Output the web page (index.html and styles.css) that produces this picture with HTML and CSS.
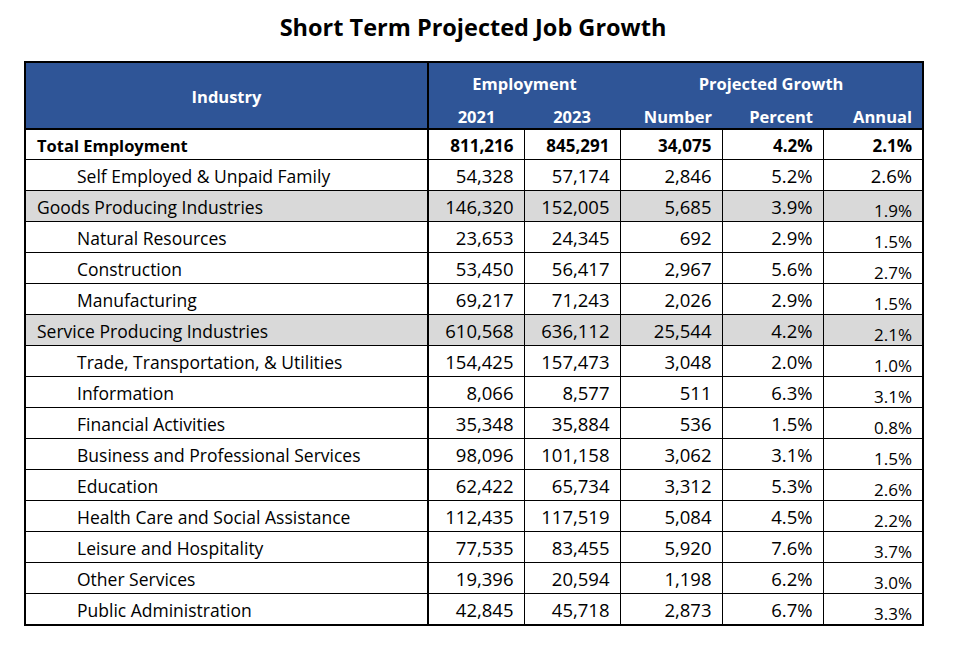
FILE: index.html
```html
<!DOCTYPE html>
<html>
<head>
<meta charset="utf-8">
<link rel="stylesheet" href="styles.css">
</head>
<body>
<div class="page">
  <h1 class="title">Short Term Projected Job Growth</h1>
  <table class="jobs">
    <colgroup>
      <col class="c-ind"><col class="c-y1"><col class="c-y2"><col class="c-num"><col class="c-pct"><col class="c-ann">
    </colgroup>
    <thead>
      <tr class="h1">
        <th rowspan="2" class="h-ind">Industry</th>
        <th colspan="2" class="h-grp">Employment</th>
        <th colspan="3" class="h-grp">Projected Growth</th>
      </tr>
      <tr class="h2">
        <th class="h-c">2021</th>
        <th class="h-c">2023</th>
        <th class="h-r">Number</th>
        <th class="h-r">Percent</th>
        <th class="h-r">Annual</th>
      </tr>
    </thead>
    <tbody>
      <tr class="total"><td class="name">Total Employment</td><td>811,216</td><td>845,291</td><td>34,075</td><td>4.2%</td><td>2.1%</td></tr>
      <tr><td class="name sub">Self Employed &amp; Unpaid Family</td><td>54,328</td><td>57,174</td><td>2,846</td><td>5.2%</td><td>2.6%</td></tr>
      <tr class="group"><td class="name">Goods Producing Industries</td><td>146,320</td><td>152,005</td><td>5,685</td><td>3.9%</td><td class="ann">1.9%</td></tr>
      <tr><td class="name sub">Natural Resources</td><td>23,653</td><td>24,345</td><td>692</td><td>2.9%</td><td class="ann">1.5%</td></tr>
      <tr><td class="name sub">Construction</td><td>53,450</td><td>56,417</td><td>2,967</td><td>5.6%</td><td class="ann">2.7%</td></tr>
      <tr><td class="name sub">Manufacturing</td><td>69,217</td><td>71,243</td><td>2,026</td><td>2.9%</td><td class="ann">1.5%</td></tr>
      <tr class="group"><td class="name">Service Producing Industries</td><td>610,568</td><td>636,112</td><td>25,544</td><td>4.2%</td><td class="ann">2.1%</td></tr>
      <tr><td class="name sub">Trade, Transportation, &amp; Utilities</td><td>154,425</td><td>157,473</td><td>3,048</td><td>2.0%</td><td class="ann">1.0%</td></tr>
      <tr><td class="name sub">Information</td><td>8,066</td><td>8,577</td><td>511</td><td>6.3%</td><td class="ann">3.1%</td></tr>
      <tr><td class="name sub">Financial Activities</td><td>35,348</td><td>35,884</td><td>536</td><td>1.5%</td><td class="ann">0.8%</td></tr>
      <tr><td class="name sub">Business and Professional Services</td><td>98,096</td><td>101,158</td><td>3,062</td><td>3.1%</td><td class="ann">1.5%</td></tr>
      <tr><td class="name sub">Education</td><td>62,422</td><td>65,734</td><td>3,312</td><td>5.3%</td><td class="ann">2.6%</td></tr>
      <tr><td class="name sub">Health Care and Social Assistance</td><td>112,435</td><td>117,519</td><td>5,084</td><td>4.5%</td><td class="ann">2.2%</td></tr>
      <tr><td class="name sub">Leisure and Hospitality</td><td>77,535</td><td>83,455</td><td>5,920</td><td>7.6%</td><td class="ann">3.7%</td></tr>
      <tr><td class="name sub">Other Services</td><td>19,396</td><td>20,594</td><td>1,198</td><td>6.2%</td><td class="ann">3.0%</td></tr>
      <tr><td class="name sub">Public Administration</td><td>42,845</td><td>45,718</td><td>2,873</td><td>6.7%</td><td class="ann">3.3%</td></tr>
    </tbody>
  </table>
</div>
</body>
</html>
```

FILE: styles.css
```css
html, body {
  margin: 0;
  padding: 0;
  background: #ffffff;
}
body {
  font-family: "Open Sans", Lato, sans-serif;
  color: #000000;
}
.page {
  width: 980px;
  padding-left: 24px;
  box-sizing: border-box;
}
.title {
  width: 898px;
  margin: 0;
  height: 61px;
  line-height: 54px;
  text-align: center;
  font-size: 23.5px;
  font-weight: 700;
}
.jobs {
  border-collapse: collapse;
  table-layout: fixed;
  width: 898px;
  border: 2px solid #000;
  font-size: 18.5px;
}
.c-ind { width: 403px; }
.c-y1 { width: 96px; }
.c-y2 { width: 96px; }
.c-num { width: 102px; }
.c-pct { width: 101px; }
.c-ann { width: 100px; }

.jobs thead th {
  background: #2F5597;
  color: #ffffff;
  font-weight: 700;
  font-size: 16.5px;
  padding: 0 10px;
  white-space: nowrap;
  line-height: 22px;
}
.jobs thead tr.h1 th { height: 30px; vertical-align: middle; }
.jobs thead tr.h2 th { height: 22px; vertical-align: middle; padding-top: 5px; padding-bottom: 0; }
.jobs thead .h-ind {
  border-right: 2px solid #000;
  border-bottom: 2px solid #000;
  text-align: center;
  padding-top: 2px;
}
.jobs thead tr.h1 .h-grp { text-align: center; padding-top: 6px; padding-bottom: 2px; }
.jobs thead .h-c { text-align: center; padding-left: 0; padding-right: 0; }
.jobs thead .h-r { text-align: right; }
.jobs thead tr.h2 th { border-bottom: 2px solid #000; }

.jobs tbody td {
  height: 28px;
  border: 1px solid #000;
  padding: 0 10px 2px 10px;
  text-align: right;
  vertical-align: bottom;
  white-space: nowrap;
  line-height: 24px;
}
.jobs tbody td:first-child { border-right: 2px solid #000; }
.jobs tbody td.name {
  text-align: left;
  padding-left: 11px;
  font-size: 17.5px;
}
.jobs tbody td.name.sub { padding-left: 51px; }
.jobs tbody tr.total td { font-weight: 700; font-size: 17px; padding-bottom: 1px; }
.jobs tbody tr.total td.name { font-size: 16.5px; }
.jobs tbody tr.group td { background: #D9D9D9; }
.jobs tbody td.ann {
  font-size: 17px;
  height: 30px;
  padding-bottom: 0;
  line-height: 20px;
}
```
